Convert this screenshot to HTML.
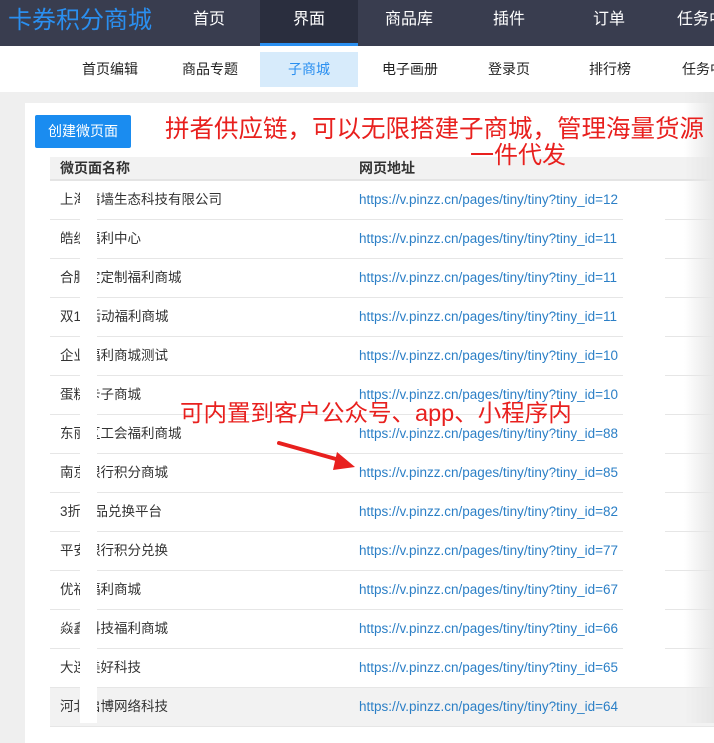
<!DOCTYPE html><html><head><meta charset="utf-8"><style>
*{margin:0;padding:0;box-sizing:border-box}
body{width:714px;height:723px;overflow:hidden;background:#efefef;font-family:"Liberation Sans","Noto Sans CJK SC",sans-serif;position:relative}
.top{position:absolute;left:0;top:0;width:714px;height:46px;background:#393d4f}
.logo{position:absolute;left:8px;top:0;line-height:42px;font-size:24px;color:#2a8ff0}
.nav{position:absolute;top:0;height:46px;line-height:40px;color:#fff;font-size:16px;width:98px;text-align:center}
.nav.act{background:#2a2e3e;border-bottom:3px solid #2a8ff0}
.sub{position:absolute;left:0;top:46px;width:714px;height:46px;background:#fff}
.si{position:absolute;top:6px;height:35px;line-height:35px;width:98px;text-align:center;font-size:14px;color:#222}
.si.act{background:#d7ebfb;color:#2a8ff0}
.card{position:absolute;left:25px;top:103px;width:700px;height:640px;background:#fff}
.btn{position:absolute;left:35px;top:115px;width:96px;height:33px;background:#1a8cf0;color:#fff;font-size:14px;line-height:33px;text-align:center;border-radius:2px}
.red{position:absolute;color:#e8201e;white-space:nowrap;line-height:1}
.th{position:absolute;left:50px;top:157px;width:664px;height:24px;background:#f2f2f2;border-bottom:2px solid #e4e4e4;font-size:14px;color:#333;font-weight:bold;line-height:22px}
.row{position:absolute;left:50px;width:664px;height:39px;border-bottom:1px solid #e6e6e6;font-size:13.5px;line-height:38px}
.row .n{position:absolute;left:10px;top:0;color:#333}
.row .u{position:absolute;left:309px;top:0;color:#2b7fc6;white-space:nowrap}
.m1{position:absolute;left:80px;top:183px;width:17px;height:540px;background:#fff}
.m2{position:absolute;left:623px;top:190px;width:42px;height:495px;background:#fff}
.fade{position:absolute;left:684px;top:92px;width:30px;height:631px;background:linear-gradient(to right,rgba(240,240,240,0),#e6e6e6)}
</style></head><body>
<div class="top"><div class="logo">卡券积分商城</div>
<div class="nav" style="left:160px">首页</div><div class="nav act" style="left:260px">界面</div><div class="nav" style="left:360px">商品库</div><div class="nav" style="left:460px">插件</div><div class="nav" style="left:560px">订单</div><div class="nav" style="left:660px;text-align:left;padding-left:17px">任务中</div></div>
<div class="sub"><div class="si" style="left:61px">首页编辑</div><div class="si" style="left:161px">商品专题</div><div class="si act" style="left:260px">子商城</div><div class="si" style="left:361px">电子画册</div><div class="si" style="left:460px">登录页</div><div class="si" style="left:561px">排行榜</div><div class="si" style="left:660px;text-align:left;padding-left:22px">任务中</div></div>
<div class="card"></div>
<div class="btn">创建微页面</div>
<div class="th"><span style="position:absolute;left:10px;top:0">微页面名称</span><span style="position:absolute;left:309px;top:0">网页地址</span></div>
<div class="row" style="top:181px"><span class="n">上海墙墙生态科技有限公司</span><span class="u">https://v.pinzz.cn/pages/tiny/tiny?tiny_id=12</span></div>
<div class="row" style="top:220px"><span class="n">皓织福利中心</span><span class="u">https://v.pinzz.cn/pages/tiny/tiny?tiny_id=11</span></div>
<div class="row" style="top:259px"><span class="n">合肥定定制福利商城</span><span class="u">https://v.pinzz.cn/pages/tiny/tiny?tiny_id=11</span></div>
<div class="row" style="top:298px"><span class="n">双11活动福利商城</span><span class="u">https://v.pinzz.cn/pages/tiny/tiny?tiny_id=11</span></div>
<div class="row" style="top:337px"><span class="n">企业福利商城测试</span><span class="u">https://v.pinzz.cn/pages/tiny/tiny?tiny_id=10</span></div>
<div class="row" style="top:376px"><span class="n">蛋糕卡子商城</span><span class="u">https://v.pinzz.cn/pages/tiny/tiny?tiny_id=10</span></div>
<div class="row" style="top:415px"><span class="n">东丽区工会福利商城</span><span class="u">https://v.pinzz.cn/pages/tiny/tiny?tiny_id=88</span></div>
<div class="row" style="top:454px"><span class="n">南京银行积分商城</span><span class="u">https://v.pinzz.cn/pages/tiny/tiny?tiny_id=85</span></div>
<div class="row" style="top:493px"><span class="n">3折商品兑换平台</span><span class="u">https://v.pinzz.cn/pages/tiny/tiny?tiny_id=82</span></div>
<div class="row" style="top:532px"><span class="n">平安银行积分兑换</span><span class="u">https://v.pinzz.cn/pages/tiny/tiny?tiny_id=77</span></div>
<div class="row" style="top:571px"><span class="n">优福福利商城</span><span class="u">https://v.pinzz.cn/pages/tiny/tiny?tiny_id=67</span></div>
<div class="row" style="top:610px"><span class="n">焱鑫科技福利商城</span><span class="u">https://v.pinzz.cn/pages/tiny/tiny?tiny_id=66</span></div>
<div class="row" style="top:649px"><span class="n">大连美好科技</span><span class="u">https://v.pinzz.cn/pages/tiny/tiny?tiny_id=65</span></div>
<div class="row" style="top:688px;background:#f2f2f2"><span class="n">河北启博网络科技</span><span class="u">https://v.pinzz.cn/pages/tiny/tiny?tiny_id=64</span></div>
<div class="m1"></div><div class="m2"></div><div class="fade"></div>
<div class="red" style="left:165px;top:118px;font-size:24.5px">拼者供应链，可以无限搭建子商城，管理海量货源</div>
<div class="red" style="left:470px;top:144px;font-size:24px">一件代发</div>
<div class="red" style="left:180px;top:402px;font-size:23.5px">可内置到客户公众号、app、小程序内</div>
<svg style="position:absolute;left:275px;top:440px" width="85" height="32"><path d="M4 3 L68 21" stroke="#e8201e" stroke-width="4" stroke-linecap="round"/><path d="M62 12 L80 27 L58 30 Z" fill="#e8201e"/></svg>
</body></html>
